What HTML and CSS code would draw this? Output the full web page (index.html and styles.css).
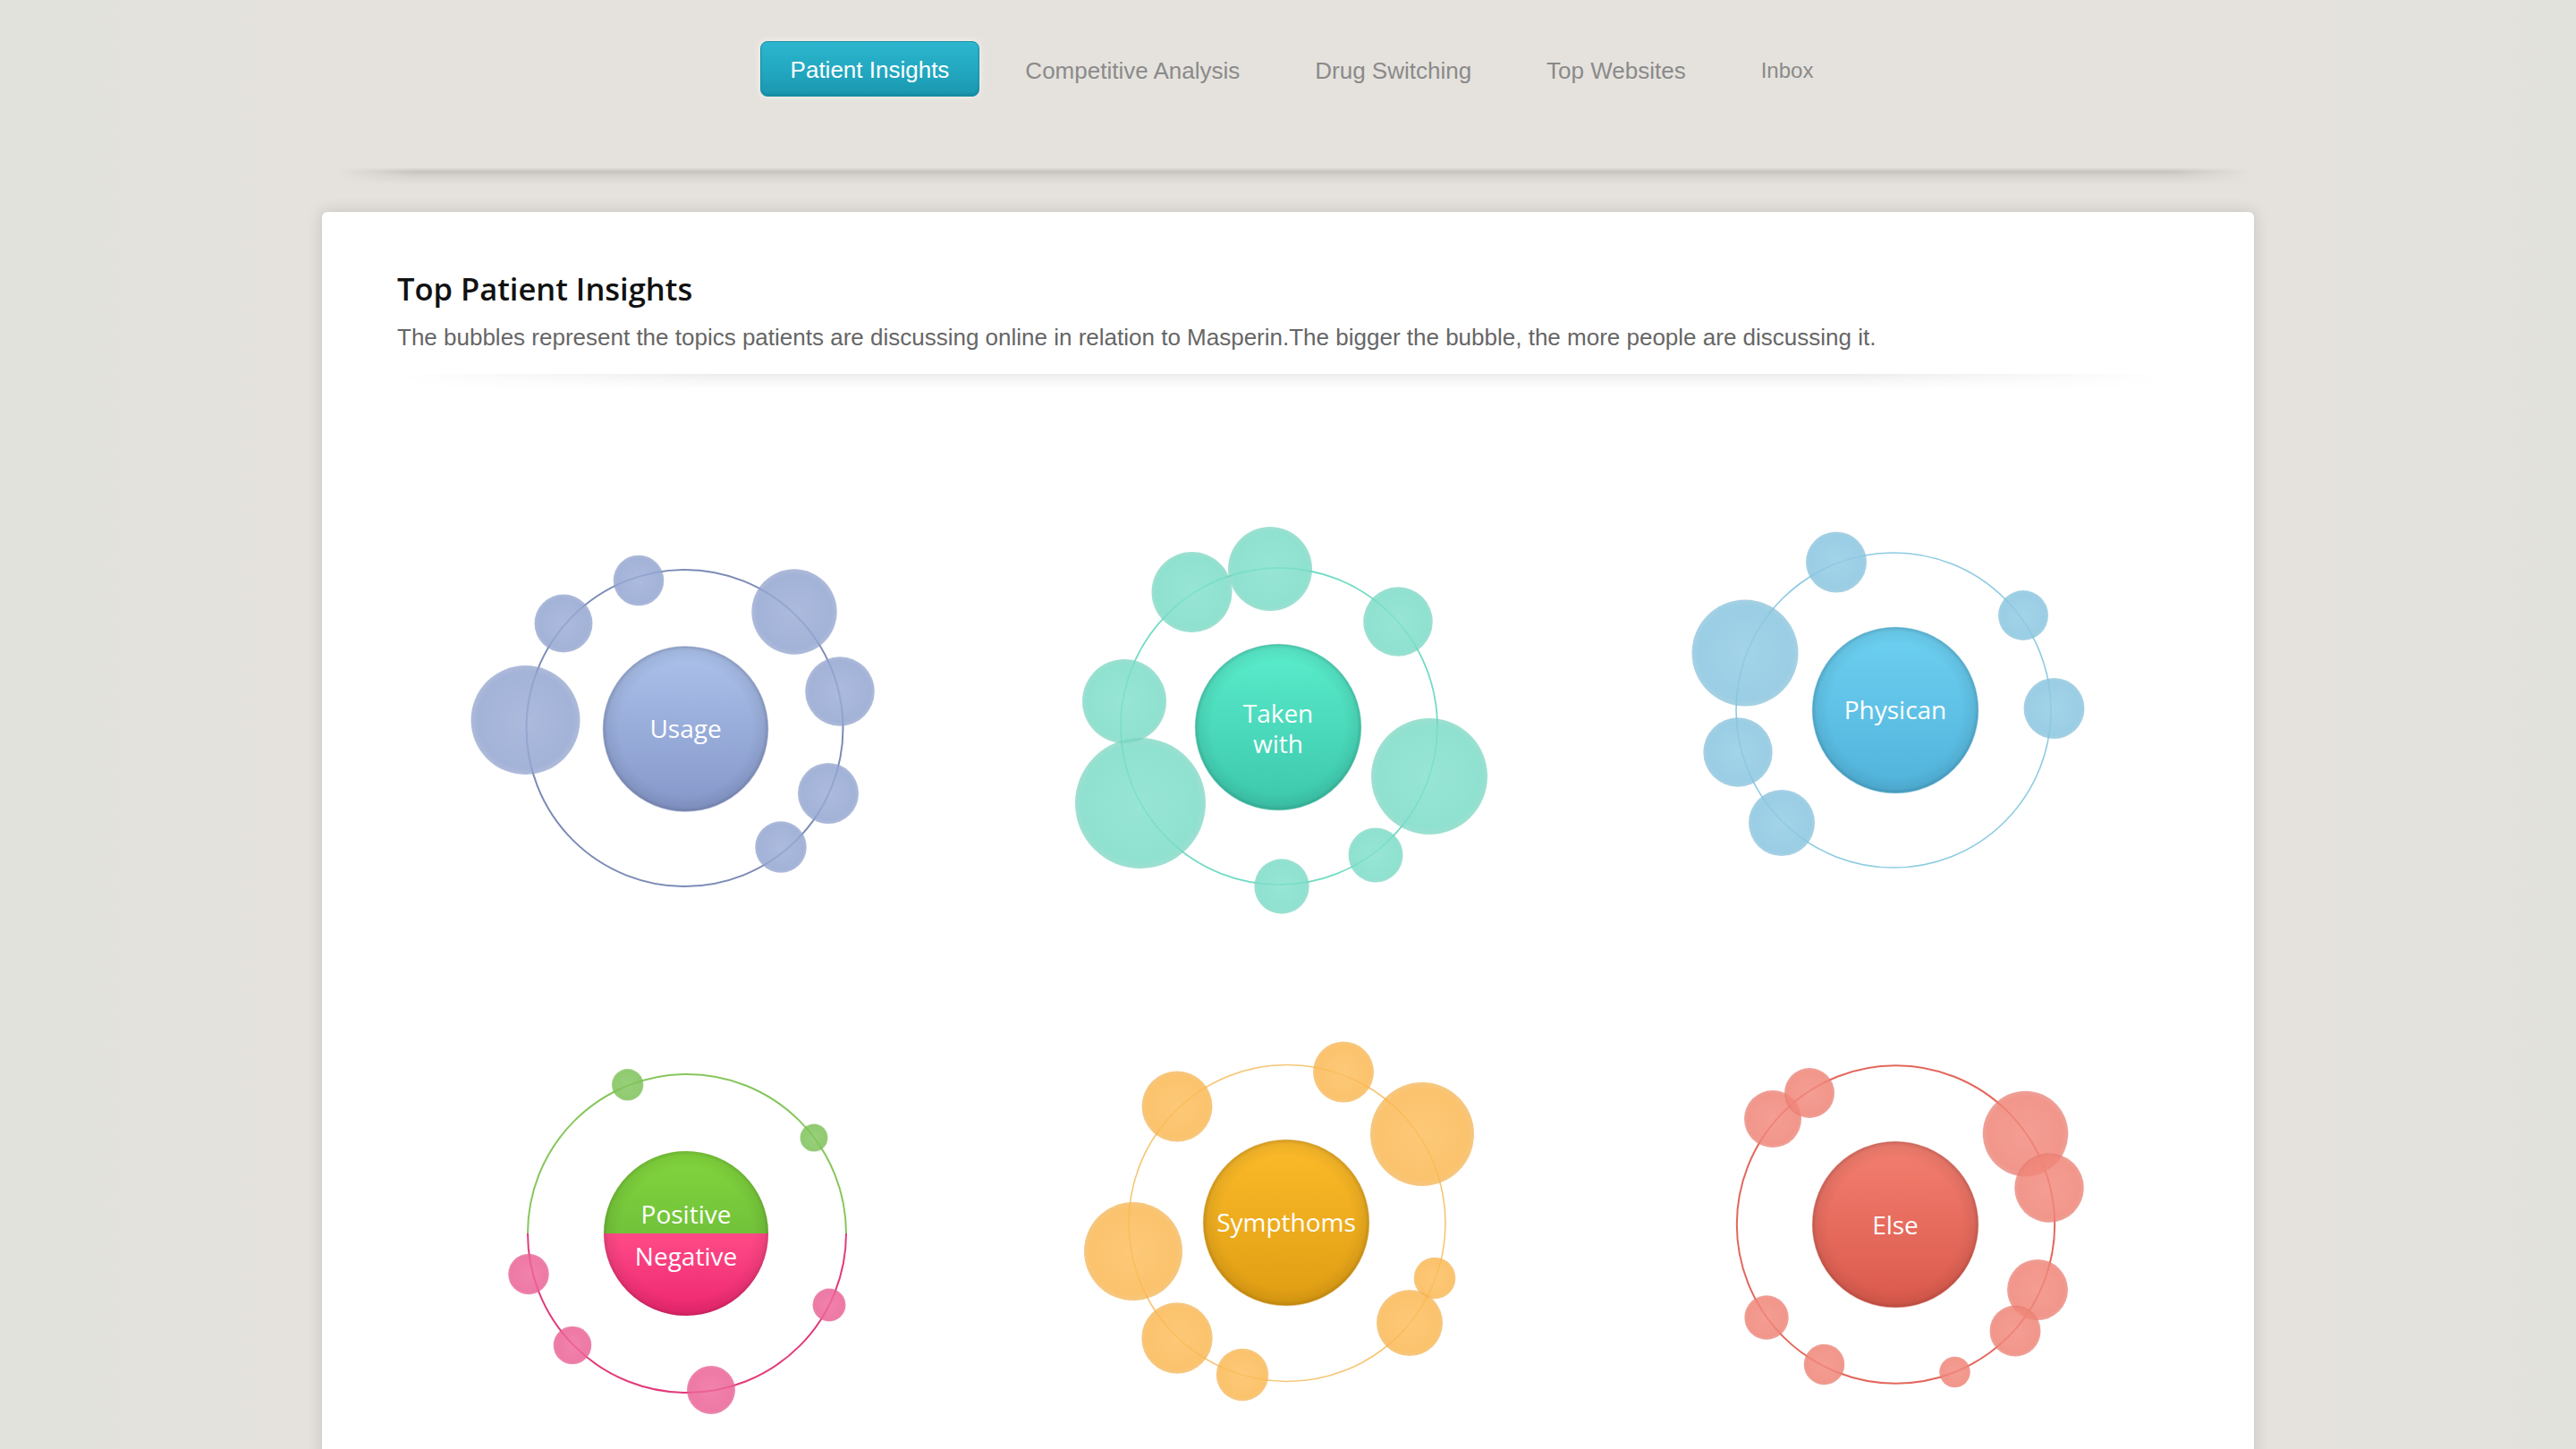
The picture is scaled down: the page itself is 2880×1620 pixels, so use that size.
FILE: index.html
```html
<!DOCTYPE html>
<html lang="en">
<head>
<meta charset="utf-8">
<title>Patient Insights</title>
<link rel="stylesheet" href="styles.css">
</head>
<body>
<svg class="defs" width="0" height="0" aria-hidden="true">
  <defs>
    <radialGradient id="edge">
      <stop offset="0.80" stop-color="#000" stop-opacity="0"/>
      <stop offset="0.95" stop-color="#000" stop-opacity="0.06"/>
      <stop offset="1" stop-color="#000" stop-opacity="0.16"/>
    </radialGradient>
    <linearGradient id="uC" x1="0" y1="0" x2="0" y2="1"><stop offset="0" stop-color="#acc2eb"/><stop offset="1" stop-color="#8597c9"/></linearGradient>
    <linearGradient id="tC" x1="0" y1="0" x2="0" y2="1"><stop offset="0" stop-color="#5aedcc"/><stop offset="1" stop-color="#3cc7ab"/></linearGradient>
    <linearGradient id="pC" x1="0" y1="0" x2="0" y2="1"><stop offset="0" stop-color="#6dd1f2"/><stop offset="1" stop-color="#51b2da"/></linearGradient>
    <linearGradient id="nC" x1="0" y1="0" x2="0" y2="1"><stop offset="0" stop-color="#82d63d"/><stop offset="0.5" stop-color="#72c23a"/><stop offset="0.5" stop-color="#ff4a87"/><stop offset="1" stop-color="#ec266f"/></linearGradient>
    <linearGradient id="nO" x1="0" y1="0" x2="0" y2="1"><stop offset="0.5" stop-color="#86c65c"/><stop offset="0.5" stop-color="#e23a7b"/></linearGradient>
    <linearGradient id="sC" x1="0" y1="0" x2="0" y2="1"><stop offset="0" stop-color="#fcbb2a"/><stop offset="1" stop-color="#df9d12"/></linearGradient>
    <linearGradient id="eC" x1="0" y1="0" x2="0" y2="1"><stop offset="0" stop-color="#f37f70"/><stop offset="1" stop-color="#da594c"/></linearGradient>
    <radialGradient id="uS"><stop offset="0" stop-color="#9badd6" stop-opacity="0.84"/><stop offset="0.88" stop-color="#94a6d1" stop-opacity="0.86"/><stop offset="1" stop-color="#8c9eca" stop-opacity="0.7"/></radialGradient>
    <radialGradient id="tS"><stop offset="0" stop-color="#84e1cd" stop-opacity="0.84"/><stop offset="0.88" stop-color="#7ddcc8" stop-opacity="0.86"/><stop offset="1" stop-color="#74d3be" stop-opacity="0.7"/></radialGradient>
    <radialGradient id="pS"><stop offset="0" stop-color="#91cbe4" stop-opacity="0.84"/><stop offset="0.88" stop-color="#8ac6e0" stop-opacity="0.86"/><stop offset="1" stop-color="#81bdd8" stop-opacity="0.7"/></radialGradient>
    <radialGradient id="gS"><stop offset="0" stop-color="#86c763" stop-opacity="0.84"/><stop offset="0.88" stop-color="#7ec259" stop-opacity="0.86"/><stop offset="1" stop-color="#76b852" stop-opacity="0.7"/></radialGradient>
    <radialGradient id="kS"><stop offset="0" stop-color="#ee6b9c" stop-opacity="0.84"/><stop offset="0.88" stop-color="#eb6397" stop-opacity="0.86"/><stop offset="1" stop-color="#e05a8d" stop-opacity="0.7"/></radialGradient>
    <radialGradient id="sS"><stop offset="0" stop-color="#fcbe5e" stop-opacity="0.84"/><stop offset="0.88" stop-color="#fbb955" stop-opacity="0.86"/><stop offset="1" stop-color="#f2b04c" stop-opacity="0.7"/></radialGradient>
    <radialGradient id="eS"><stop offset="0" stop-color="#f28b7f" stop-opacity="0.84"/><stop offset="0.88" stop-color="#f08578" stop-opacity="0.86"/><stop offset="1" stop-color="#e67a6e" stop-opacity="0.7"/></radialGradient>
  </defs>
</svg>

<header class="topbar">
  <nav class="tabs">
    <a class="tab active">Patient Insights</a>
    <a class="tab">Competitive Analysis</a>
    <a class="tab">Drug Switching</a>
    <a class="tab">Top Websites</a>
    <a class="tab small">Inbox</a>
  </nav>
</header>

<main class="card">
  <section class="intro">
    <h1 class="title">Top Patient Insights</h1>
    <p class="lead">The bubbles represent the topics patients are discussing online in relation to Masperin.The bigger the bubble, the more people are discussing it.</p>
  </section>
  <div class="divider"></div>

  <div class="grid">
    <figure class="cluster">
      <svg viewBox="0 0 664 556" width="664" height="556">
        <circle class="orbit" cx="321.5" cy="279" r="177" stroke="#7b8bb6" stroke-width="2"/>
        <g fill="url(#uS)">
          <circle cx="270" cy="114" r="28.3"/>
          <circle cx="186" cy="162" r="32.5"/>
          <circle cx="143.5" cy="270" r="61"/>
          <circle cx="444" cy="149" r="47.7"/>
          <circle cx="495" cy="238" r="38.8"/>
          <circle cx="482" cy="352" r="34"/>
          <circle cx="429" cy="412" r="28.8"/>
        </g>
        <circle cx="322.5" cy="280" r="92" fill="url(#uC)"/>
        <circle cx="322.5" cy="280" r="92" fill="url(#edge)" stroke="#7585b5" stroke-opacity="0.5" stroke-width="1.5"/>
        <text class="lbl" x="322.5" y="290">Usage</text>
      </svg>
    </figure>

    <figure class="cluster">
      <svg viewBox="0 0 664 556" width="664" height="556">
        <circle class="orbit" cx="322" cy="277" r="177" stroke="#72dcc5" stroke-width="1.8"/>
        <g fill="url(#tS)">
          <circle cx="224.5" cy="127" r="45"/>
          <circle cx="312" cy="101" r="47"/>
          <circle cx="455" cy="160" r="38.8"/>
          <circle cx="149" cy="249" r="47"/>
          <circle cx="167" cy="363" r="73"/>
          <circle cx="490" cy="333" r="65"/>
          <circle cx="430" cy="421" r="30.5"/>
          <circle cx="325" cy="456" r="30.7"/>
        </g>
        <circle cx="321" cy="278" r="92.5" fill="url(#tC)"/>
        <circle cx="321" cy="278" r="92.5" fill="url(#edge)" stroke="#35b59b" stroke-opacity="0.5" stroke-width="1.5"/>
        <text class="lbl" x="321" y="273">Taken</text>
        <text class="lbl" x="321" y="307">with</text>
      </svg>
    </figure>

    <figure class="cluster">
      <svg viewBox="0 0 664 556" width="664" height="556">
        <circle class="orbit" cx="345" cy="259" r="176" stroke="#8dcbe2" stroke-width="1.6"/>
        <g fill="url(#pS)">
          <circle cx="281" cy="93.5" r="34"/>
          <circle cx="179" cy="195" r="59.5"/>
          <circle cx="490" cy="153" r="28"/>
          <circle cx="524.5" cy="257" r="34"/>
          <circle cx="171" cy="306" r="38.7"/>
          <circle cx="220" cy="385" r="37"/>
        </g>
        <circle cx="347" cy="259" r="92.5" fill="url(#pC)"/>
        <circle cx="347" cy="259" r="92.5" fill="url(#edge)" stroke="#3f9fc8" stroke-opacity="0.5" stroke-width="1.5"/>
        <text class="lbl" x="347" y="269">Physican</text>
      </svg>
    </figure>

    <figure class="cluster">
      <svg viewBox="0 0 664 556" width="664" height="556">
        <circle class="orbit" cx="324" cy="288" r="178" stroke="url(#nO)" stroke-width="2"/>
        <g fill="url(#gS)">
          <circle cx="257.7" cy="121.8" r="17.7"/>
          <circle cx="466" cy="181" r="15.5"/>
        </g>
        <g fill="url(#kS)">
          <circle cx="147" cy="333.5" r="22.8"/>
          <circle cx="483" cy="368" r="18.5"/>
          <circle cx="196" cy="413" r="21.3"/>
          <circle cx="351" cy="463" r="27"/>
        </g>
        <circle cx="323" cy="288" r="92" fill="url(#nC)"/>
        <circle cx="323" cy="288" r="92" fill="url(#edge)"/>
        <text class="lbl" x="323" y="277">Positive</text>
        <text class="lbl" x="323" y="324">Negative</text>
      </svg>
    </figure>

    <figure class="cluster">
      <svg viewBox="0 0 664 556" width="664" height="556">
        <circle class="orbit" cx="331" cy="276.5" r="177" stroke="#f6c574" stroke-width="1.6"/>
        <g fill="url(#sS)">
          <circle cx="208" cy="146" r="39.5"/>
          <circle cx="394" cy="107.5" r="34"/>
          <circle cx="482" cy="177" r="58"/>
          <circle cx="159" cy="308" r="55"/>
          <circle cx="496" cy="338" r="23.3"/>
          <circle cx="468" cy="388" r="37"/>
          <circle cx="208" cy="405" r="39.7"/>
          <circle cx="281" cy="446" r="29.2"/>
        </g>
        <circle cx="330" cy="276" r="92.5" fill="url(#sC)"/>
        <circle cx="330" cy="276" r="92.5" fill="url(#edge)" stroke="#c98a0c" stroke-opacity="0.45" stroke-width="1.5"/>
        <text class="lbl" x="330" y="286">Sympthoms</text>
      </svg>
    </figure>

    <figure class="cluster">
      <svg viewBox="0 0 664 556" width="664" height="556">
        <circle class="orbit" cx="347.5" cy="278" r="177.7" stroke="#e3675b" stroke-width="2"/>
        <g fill="url(#eS)">
          <circle cx="210" cy="160" r="32"/>
          <circle cx="251" cy="131" r="28"/>
          <circle cx="492.5" cy="176.5" r="47.8"/>
          <circle cx="519" cy="237" r="38.8"/>
          <circle cx="506" cy="351" r="34"/>
          <circle cx="481" cy="397" r="28.5"/>
          <circle cx="203" cy="382" r="24.7"/>
          <circle cx="267.5" cy="434.5" r="22.8"/>
          <circle cx="413.5" cy="443" r="17.3"/>
        </g>
        <circle cx="347" cy="278" r="92.5" fill="url(#eC)"/>
        <circle cx="347" cy="278" r="92.5" fill="url(#edge)" stroke="#c44a3e" stroke-opacity="0.45" stroke-width="1.5"/>
        <text class="lbl" x="347" y="289">Else</text>
      </svg>
    </figure>
  </div>
</main>
</body>
</html>
```

FILE: styles.css
```css
html, body {
  margin: 0;
  padding: 0;
}

body {
  background: linear-gradient(90deg, #e1e2dc 0, #e5e2dd 320px, #e5e2dd 2560px, #e2e2dc 100%);
  font-family: "Liberation Sans", Arial, sans-serif;
  overflow: hidden;
  height: 1620px;
}

.defs {
  display: block;
  width: 0;
  height: 0;
  overflow: hidden;
}

.topbar {
  position: relative;
  width: 2137px;
  height: 190px;
  margin-left: 378px;
  box-sizing: border-box;
  padding-top: 46px;
}

.topbar::after {
  content: "";
  position: absolute;
  left: 0;
  right: 0;
  top: 188px;
  height: 18px;
  background: linear-gradient(180deg, rgba(0, 0, 0, 0.02) 0, rgba(0, 0, 0, 0.13) 22%, rgba(0, 0, 0, 0.07) 45%, rgba(0, 0, 0, 0) 100%);
  -webkit-mask-image: linear-gradient(90deg, transparent 0, #000 4%, #000 96%, transparent 100%);
  mask-image: linear-gradient(90deg, transparent 0, #000 4%, #000 96%, transparent 100%);
}

.tabs {
  display: flex;
  justify-content: center;
  padding-left: 17px;
}

.tab {
  display: block;
  height: 62px;
  line-height: 66px;
  padding: 0 33px;
  margin: 0 9px;
  font-size: 26px;
  color: #8a8a8a;
  white-space: nowrap;
  box-sizing: border-box;
}

.tab.small {
  font-size: 24px;
}

.tab.active {
  color: #ffffff;
  background: linear-gradient(180deg, #2db6cf 0%, #22a7c0 55%, #1a97ae 100%);
  border: 1px solid #1a8fa6;
  border-radius: 8px;
  line-height: 62px;
  box-shadow: 0 0 10px rgba(255, 255, 255, 0.6), inset 0 -2px 2px rgba(0, 70, 90, 0.15);
}

.card {
  display: block;
  width: 2160px;
  margin: 47px auto 0;
  box-sizing: border-box;
  padding: 65px 84px 60px;
  background: #ffffff;
  border-radius: 6px 6px 0 0;
  box-shadow: 0 0 18px rgba(0, 0, 0, 0.14);
}

.intro {
  padding-bottom: 26px;
}

.title {
  margin: 0;
  font-family: "Open Sans", "Liberation Sans", sans-serif;
  font-weight: 600;
  font-size: 34.5px;
  line-height: 42px;
  color: #111111;
}

.lead {
  margin: 18px 0 0;
  font-size: 26px;
  line-height: 30px;
  color: #666666;
}

.divider {
  height: 18px;
  margin-right: 10px;
  background: linear-gradient(180deg, rgba(0, 0, 0, 0.075) 0, rgba(0, 0, 0, 0.03) 45%, rgba(0, 0, 0, 0) 100%);
  -webkit-mask-image: linear-gradient(90deg, transparent 0, #000 18%, #000 82%, transparent 100%);
  mask-image: linear-gradient(90deg, transparent 0, #000 18%, #000 82%, transparent 100%);
}

.grid {
  display: grid;
  grid-template-columns: repeat(3, 664px);
  grid-auto-rows: 556px;
  margin-top: 99px;
}

.cluster {
  margin: 0;
}

.cluster svg {
  display: block;
}

.orbit {
  fill: none;
}

.lbl {
  font-family: "Open Sans", "Liberation Sans", sans-serif;
  font-size: 28px;
  font-weight: 500;
  fill: #ffffff;
  text-anchor: middle;
}
```
